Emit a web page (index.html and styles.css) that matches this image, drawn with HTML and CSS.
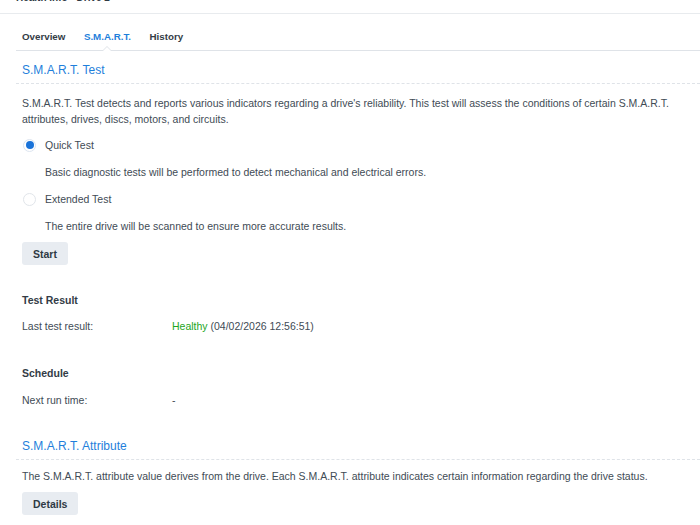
FILE: index.html
```html
<!DOCTYPE html>
<html lang="en">
<head>
    <meta charset="UTF-8">
    <title>Health Info - Drive 2</title>
    <link rel="stylesheet" href="styles.css">
</head>
<body>
    <div class="window-title">Health Info - Drive 2</div>
    <div class="content">
        <div class="tabs">
            <div class="tab">Overview</div>
            <div class="tab active">S.M.A.R.T.</div>
            <div class="tab">History</div>
        </div>

        <div class="section-title">S.M.A.R.T. Test</div>
        <p class="desc">S.M.A.R.T. Test detects and reports various indicators regarding a drive's reliability. This test will assess the conditions of certain S.M.A.R.T. attributes, drives, discs, motors, and circuits.</p>

        <label class="radio checked first"><span class="radio-dot"></span>Quick Test</label>
        <div class="radio-note">Basic diagnostic tests will be performed to detect mechanical and electrical errors.</div>
        <label class="radio"><span class="radio-dot"></span>Extended Test</label>
        <div class="radio-note">The entire drive will be scanned to ensure more accurate results.</div>
        <button class="btn">Start</button>

        <div class="group-title result-title">Test Result</div>
        <div class="field">
            <div class="field-label">Last test result:</div>
            <div class="field-value"><span class="healthy">Healthy</span> (04/02/2026 12:56:51)</div>
        </div>

        <div class="group-title schedule-title">Schedule</div>
        <div class="field schedule-field">
            <div class="field-label">Next run time:</div>
            <div class="field-value">-</div>
        </div>

        <div class="section-title attr-title">S.M.A.R.T. Attribute</div>
        <p class="desc single">The S.M.A.R.T. attribute value derives from the drive. Each S.M.A.R.T. attribute indicates certain information regarding the drive status.</p>
        <button class="btn">Details</button>
    </div>
</body>
</html>
```

FILE: styles.css
```css
body {
    margin: 0;
    font-family: "Liberation Sans", Arial, sans-serif;
    font-size: 10.5px;
    color: #414b55;
    background-color: #fff;
    overflow: hidden;
}

.window-title {
    margin-top: -9px;
    height: 22px;
    line-height: 14px;
    padding-left: 16px;
    font-size: 10px;
    font-weight: bold;
    color: #2f3a44;
    border-bottom: 1px solid #e8ebee;
}

.content {
    padding-left: 16px;
}

.tabs {
    display: flex;
    gap: 18.5px;
    padding: 15px 0 6px 6px;
    line-height: 15px;
    font-size: 9.75px;
    border-bottom: 1px solid #dfe3e8;
}

.tab {
    position: relative;
    font-weight: bold;
    color: #333c46;
}

.tab.active {
    color: #1f7fdb;
}

/* little caret under the active tab */
.tab.active::before,
.tab.active::after {
    content: "";
    position: absolute;
    left: 50%;
    margin-left: -5px;
    border: 5px solid transparent;
    border-top: 0;
}

.tab.active::before {
    bottom: -7px;
    border-bottom-color: #dfe3e8;
}

.tab.active::after {
    bottom: -8px;
    border-bottom-color: #fff;
}

.section-title {
    margin-top: 12px;
    padding: 0 0 6px 6px;
    font-size: 12px;
    line-height: 14px;
    color: #1f7fdb;
    border-bottom: 1px dashed #dfe3e8;
}

.desc {
    margin: 11px 0 0;
    padding-left: 6px;
    line-height: 16px;
    padding-right: 20px;
}

.radio {
    display: flex;
    align-items: center;
    margin-top: 11px;
    padding-left: 7px;
    height: 16px;
    line-height: 16px;
}

.radio.first {
    margin-top: 10px;
}

.radio-dot {
    width: 13px;
    height: 13px;
    border: 1px solid #e1e5ea;
    border-radius: 50%;
    margin-right: 9px;
    box-sizing: border-box;
    position: relative;
}

.radio.checked .radio-dot {
    border-color: #dde5f0;
}

.radio.checked .radio-dot::after {
    content: "";
    position: absolute;
    left: 1.5px;
    top: 1.5px;
    width: 8px;
    height: 8px;
    border-radius: 50%;
    background-color: #1a73d9;
}

.radio-note {
    margin-top: 11px;
    padding-left: 29px;
    line-height: 16px;
}

.btn {
    display: block;
    margin: 8px 0 0 6px;
    height: 23px;
    padding: 0 11px;
    border: none;
    border-radius: 3px;
    background-color: #e8ecf1;
    font-family: inherit;
    font-size: 10.5px;
    font-weight: bold;
    color: #2f3a44;
}

.group-title {
    padding-left: 6px;
    font-weight: bold;
    line-height: 16px;
    color: #333c46;
}

.result-title {
    margin-top: 27px;
}

.schedule-title {
    margin-top: 31px;
}

.field {
    display: flex;
    margin-top: 10px;
    padding-left: 6px;
    line-height: 16px;
}

.schedule-field {
    margin-top: 11px;
}

.field-label {
    width: 150px;
}

.healthy {
    color: #1ea51e;
}

.attr-title {
    margin-top: 31px;
}

.desc.single {
    margin-top: 8px;
}
```
